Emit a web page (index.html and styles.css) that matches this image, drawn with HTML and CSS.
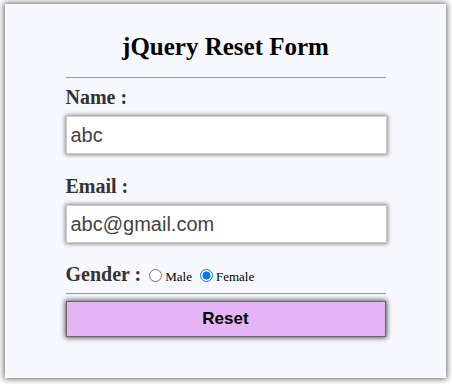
FILE: index.html
```html
<!DOCTYPE html>
<html>
<head>
<meta charset="utf-8">
<link rel="stylesheet" href="styles.css">
</head>
<body>
<div class="card">
  <h2 class="title">jQuery Reset Form</h2>
  <form class="form">
    <hr class="rule">
    <label class="lbl">Name :</label>
    <input class="field" type="text" value="abc">
    <label class="lbl lbl-email">Email :</label>
    <input class="field" type="text" value="abc@gmail.com">
    <div class="gender">
      <span class="lbl">Gender :</span>
      <label class="opt"><input class="radio" type="radio" name="g">Male</label>
      <label class="opt"><input class="radio" type="radio" name="g" checked>Female</label>
    </div>
    <hr class="rule rule2">
    <button class="btn" type="button">Reset</button>
  </form>
</div>
</body>
</html>
```
FILE: styles.css
```css
html, body { margin: 0; padding: 0; background: #fff; }
body { padding: 4px 6px 6px 5px; }
.card {
  width: 441px;
  height: 374px;
  box-sizing: border-box;
  background: #f8f8ff;
  box-shadow: 0 0 6px 1px #666;
  font-family: "Liberation Serif", "Times New Roman", serif;
  padding-top: 1px;
}
.title {
  margin: 28px 0 0;
  text-align: center;
  font-size: 25px;
  font-weight: bold;
  line-height: 28px;
  color: #000;
}
.form {
  width: 320px;
  margin: 0 auto;
  display: flex;
  flex-direction: column;
}
.rule {
  margin: 16px 0 0;
  border: 0;
  border-top: 1px solid #999;
  height: 0;
}
.lbl {
  font-size: 20px;
  font-weight: bold;
  color: #333;
  line-height: 20px;
}
.form > .lbl { margin-top: 9px; }
.form > .lbl-email { margin-top: 22px; }
.field {
  margin-top: 9px;
  width: 321px;
  height: 38px;
  box-sizing: border-box;
  border: 1px solid #ccc;
  background: #fff;
  box-shadow: 0 0 4px 1px #888;
  font-family: "Liberation Sans", Arial, sans-serif;
  font-size: 20px;
  color: #444;
  padding: 0 4px;
  outline: none;
}
.gender {
  margin-top: 21px;
  line-height: 20px;
}
.opt {
  font-size: 13px;
  color: #000;
}
.radio { margin: 0 3px 0 4px; width: 13px; height: 13px; vertical-align: -1px; }
.rule2 { margin-top: 6px; }
.btn {
  margin-top: 7px;
  width: 320px;
  height: 36px;
  background: #e4b4f4;
  border: 1px solid #666;
  box-shadow: 0 0 5px 1px #555;
  font-family: "Liberation Sans", Arial, sans-serif;
  font-weight: bold;
  font-size: 17px;
  color: #000;
}
```
